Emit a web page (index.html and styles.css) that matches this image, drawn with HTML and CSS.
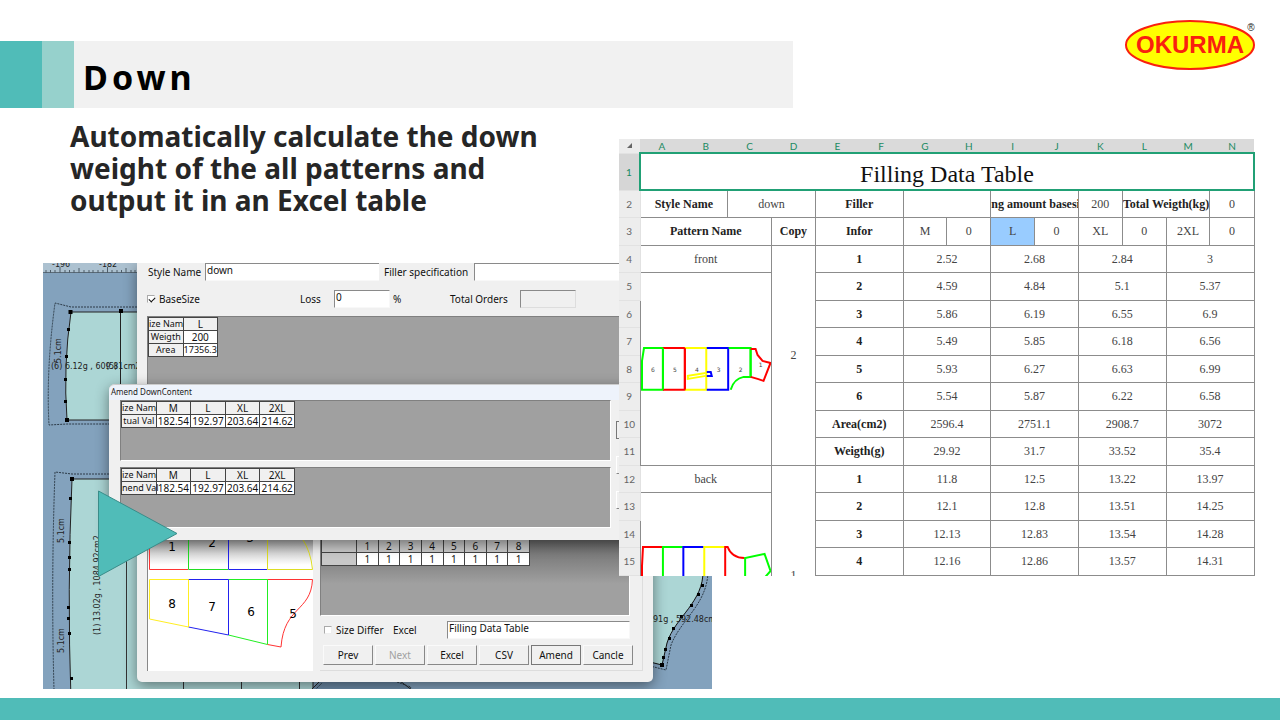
FILE: index.html
```html
<!DOCTYPE html>
<html lang="en">
<head>
<meta charset="utf-8">
<title>Down</title>
<link rel="stylesheet" href="styles.css">
</head>
<body>
<header class="top">
  <div class="banner">
    <span class="accent"></span><span class="accent-light"></span>
    <h1 class="title">Down</h1>
  </div>
  <svg class="logo" viewBox="1124 19 134 52" role="img" aria-label="OKURMA">
    <ellipse cx="1190" cy="45" rx="64" ry="24" fill="#ff0" stroke="#f9200f" stroke-width="2"/>
    <text x="1190" y="53" class="logo-text">OKURMA</text>
    <text x="1251" y="31" class="logo-mark">®</text>
  </svg>
</header>
<main class="content">
  <p class="lead">Automatically calculate the down weight of the all patterns and output it in an Excel table</p>

  <section class="cad">
    <svg class="canvas" viewBox="43 263 669 426" preserveAspectRatio="xMinYMin slice">
      <rect x="43" y="263" width="669" height="426" fill="#83a2bd"/>
      <rect x="43" y="263" width="94" height="10" fill="#acc1d0"/>
      <path d="M43 272.500H137" stroke="#5b6b78"/>
      <path d="M46 270v3M50.500 270v3M55 270v3M60 267v6M65 270v3M69.500 270v3M74 270v3M79 268v5M84 270v3M89 270v3M93 270v3M98 270v3M103 270v3M107.500 267v6M112 270v3M117 270v3M121.500 270v3M126 268v5M131 270v3M135 270v3" stroke="#4d5c68"/>
      <text x="52" y="267" class="cad-text">-196</text><text x="99" y="267" class="cad-text">-182</text>
      <path d="M71 312H140V420H67Q63 366 71 312Z" fill="#acd6d5" stroke="#222"/>
      <path d="M120.500 310V420" stroke="#222"/>
      <path d="M140 307H71L55 303Q46 370 49 425L67 424H140" class="dash"/>
      <path d="M68.500 310h4v4h-4zM119 309h4v4h-4zM65 418h4v4h-4zM67 328h3v3h-3zM65 355h3v3h-3zM64 378h3v3h-3zM64 400h3v3h-3z"/>
      <text x="51" y="369" class="cad-text">(6) 6.12g , 609.81cm2</text>
      <text x="106" y="369" class="cad-text">(5)</text>
      <text transform="translate(61 363) rotate(-90)" class="cad-text">5.1cm</text>
      <path d="M72 479H313V700H71Q67 590 72 479Z" fill="#acd6d5" stroke="#222"/>
      <path d="M112 474H72L55 472Q51 580 54 690" class="dash"/>
      <path d="M126.500 540V689M183.500 680V689M241.500 680V689M299.500 680V689" stroke="#333"/>
      <path d="M70 477h4v4h-4zM69 497h3v3h-3zM68 541h3v3h-3zM68 556h3v3h-3zM68 568h3v3h-3zM67 606h3v3h-3zM67 617h3v3h-3zM68 632h3v3h-3zM70 677h3v3h-3z"/>
      <text transform="translate(64 543) rotate(-90)" class="cad-text">5.1cm</text>
      <text transform="translate(64 653) rotate(-90)" class="cad-text">5.1cm</text>
      <text transform="translate(100 635) rotate(-90)" class="cad-text">(1) 13.02g , 1084.92cm2</text>
      <path d="M311 690L320 681H400L412 690Z" fill="#6d8ca8" stroke="#222"/>
      <path d="M315 690L322 683M397 682L411 687L409 690" class="dash"/>
      <path d="M650 570H703C704 602 675 617 667 643L662 665L650 662Z" fill="#acd6d5"/>
      <path d="M703 570C704 602 675 617 667 643L662 665L650 662" fill="none" stroke="#111"/>
      <path d="M708 570C708 604 681 619 671 645L666 670L650 666" class="dash"/>
      <path d="M660 663h4v4h-4zM701 584h3v3h-3zM697 593h3v3h-3zM690 604h3v3h-3zM680 615h3v3h-3zM672 627h3v3h-3zM668 637h3v3h-3zM664 648h3v3h-3zM662 656h3v3h-3z"/>
      <text x="653" y="622" class="cad-text">91g , 592.48cm</text>
    </svg>

    <div class="window dialog">
      <div class="row row-name">
        <label for="style-name" class="w-style">Style Name</label>
        <input id="style-name" class="field f-style" value="down">
        <label for="filler" class="w-filler">Filler specification</label>
        <input id="filler" class="field f-filler">
      </div>
      <div class="row row-base">
        <label class="check w-base"><input type="checkbox" class="box" checked>BaseSize</label>
        <label for="loss" class="w-loss">Loss</label>
        <input id="loss" class="field f-short" value="0"><span class="w-pct">%</span>
        <label for="orders" class="w-orders">Total Orders</label>
        <input id="orders" class="field f-short" disabled>
      </div>
      <div class="well well-base">
        <table class="grid grid-base">
          <tr><th>ize Nam</th><th>L</th></tr>
          <tr><th>Weigth</th><td>200</td></tr>
          <tr><th>Area</th><td class="tight">17356.3</td></tr>
        </table>
      </div>
      <div class="lower">
        <svg class="pieces" viewBox="147 510 166 161">
          <defs><linearGradient id="shade" x1="0" y1="0" x2="0" y2="1"><stop offset="0" stop-color="#999"/><stop offset="1" stop-color="#fff"/></linearGradient></defs>
          <rect x="147" y="510" width="166" height="161" fill="#fff"/>
          <rect x="147" y="535" width="166" height="30" fill="url(#shade)"/>
          <path d="M147.500 510V671" stroke="#888"/>
          <g fill="none">
            <path d="M149.500 535V569.500H188" stroke="#f33"/><path d="M188.500 535V569.500H228" stroke="#2d2"/>
            <path d="M228.500 535V569.500H267" stroke="#22e"/><path d="M267.500 535V569.500H312.500Q311 552 302 538" stroke="#dd2"/>
            <path d="M149.500 579.500H188.500V627L149.500 619Z" stroke="#fe2"/>
            <path d="M188.500 579.500H228.500V635L188.500 627" stroke="#22e"/>
            <path d="M228.500 579.500H267.500V644.500L228.500 635" stroke="#2e2"/>
            <path d="M267.500 579.500H312.500C311 612 284 606 281 647L267.500 644.500" stroke="#f33"/>
            <path d="M188.500 579.500V627" stroke="#fe2"/><path d="M228.500 579.500V635" stroke="#22e"/><path d="M267.500 579.500V644" stroke="#2e2"/>
          </g>
          <g class="piece-no"><text x="172" y="551">1</text><text x="212" y="547">2</text><text x="250" y="542">3</text><text x="172" y="608">8</text><text x="212" y="611">7</text><text x="251" y="616">6</text><text x="293" y="618">5</text></g>
        </svg>
        <div class="output">
          <div class="well well-out">
            <table class="grid grid-out">
              <tr><th class="first"></th><th>1</th><th>2</th><th>3</th><th>4</th><th>5</th><th>6</th><th>7</th><th>8</th></tr>
              <tr><th class="first"></th><td>1</td><td>1</td><td>1</td><td>1</td><td>1</td><td>1</td><td>1</td><td>1</td></tr>
            </table>
          </div>
          <div class="row row-excel">
            <label class="check w-differ"><input type="checkbox" class="box">Size Differ</label>
            <label for="excel-name" class="w-excel">Excel</label>
            <input id="excel-name" class="field f-excel" value="Filling Data Table">
          </div>
          <div class="buttons">
            <button>Prev</button><button disabled>Next</button><button>Excel</button><button>CSV</button><button class="default">Amend</button><button>Cancle</button>
          </div>
        </div>
      </div>
    </div>

    <div class="window amend">
      <div class="caption">Amend DownContent</div>
      <div class="amend-body">
        <div class="wells">
          <div class="well well-amend">
            <table class="grid grid-sizes">
              <tr><th>ize Nam</th><th>M</th><th>L</th><th>XL</th><th>2XL</th></tr>
              <tr><th>tual Val</th><td>182.54</td><td>192.97</td><td>203.64</td><td>214.62</td></tr>
            </table>
          </div>
          <div class="well well-amend">
            <table class="grid grid-sizes">
              <tr><th>ize Nam</th><th>M</th><th>L</th><th>XL</th><th>2XL</th></tr>
              <tr><th>nend Val</th><td>182.54</td><td>192.97</td><td>203.64</td><td>214.62</td></tr>
            </table>
          </div>
        </div>
        <div class="side"><span class="stub dark"></span><span class="stub"></span><span class="stub"></span></div>
      </div>
    </div>
    <svg class="arrow" viewBox="0 0 80 88"><path d="M.500 1V86.500L79 43.500Z" fill="#50bcb8" stroke="#398c89"/></svg>
  </section>

  <section class="sheet">
    <table class="cells">
      <colgroup><col class="index"><col span="14"></colgroup>
      <thead><tr><th><svg class="corner" viewBox="0 0 5 5"><path d="M5 0V5H0Z" fill="#666"/></svg></th><th>A</th><th>B</th><th>C</th><th>D</th><th>E</th><th>F</th><th>G</th><th>H</th><th>I</th><th>J</th><th>K</th><th>L</th><th>M</th><th>N</th></tr></thead>
      <tbody>
      <tr class="big"><th class="picked">1</th><td colspan="14" class="heading">Filling Data Table</td></tr>
      <tr><th>2</th><td colspan="2" class="b">Style Name</td><td colspan="2">down</td><td colspan="2" class="b">Filler</td><td colspan="2"></td><td colspan="2" class="b">ng amount basesi</td><td>200</td><td colspan="2" class="b">Total Weigth(kg)</td><td>0</td></tr>
      <tr><th>3</th><td colspan="3" class="b">Pattern Name</td><td class="b">Copy</td><td colspan="2" class="b">Infor</td><td>M</td><td>0</td><td class="base">L</td><td>0</td><td>XL</td><td>0</td><td>2XL</td><td>0</td></tr>
      <tr><th>4</th><td colspan="3">front</td><td rowspan="8">2</td><td colspan="2" class="b">1</td><td colspan="2">2.52</td><td colspan="2">2.68</td><td colspan="2">2.84</td><td colspan="2">3</td></tr>
      <tr><th>5</th><td colspan="3" rowspan="7">
        <svg class="pattern" viewBox="640 344 131 46">
          <g fill="none" stroke-width="2">
            <path d="M662 346H643L641 359V388H662Z" stroke="#0f0"/>
            <path d="M662 346H684V388H662" stroke="red"/><path d="M684 346H705.500V388H684" stroke="#ff0"/>
            <path d="M706 346H727.500V388H706" stroke="#00f"/><path d="M728 346H750V375H743Q733 377 730 388" stroke="#0f0"/>
            <path d="M662 346V388M750 346V375" stroke="#0f0"/><path d="M684 346V388" stroke="red"/>
            <path d="M750 347H755L757 353L762 359L770 361L763 379L757 377L750 375" stroke="red"/>
            <path d="M705 371L687 374V377L705 374" stroke="#ff0"/><path d="M706 370H710L711 374H706" stroke="#00f"/>
          </g>
          <g class="mini"><text x="652" y="370">6</text><text x="674" y="370">5</text><text x="696" y="370">4</text><text x="718" y="370">3</text><text x="740" y="370">2</text><text x="760" y="365">1</text></g>
        </svg></td><td colspan="2" class="b">2</td><td colspan="2">4.59</td><td colspan="2">4.84</td><td colspan="2">5.1</td><td colspan="2">5.37</td></tr>
      <tr><th>6</th><td colspan="2" class="b">3</td><td colspan="2">5.86</td><td colspan="2">6.19</td><td colspan="2">6.55</td><td colspan="2">6.9</td></tr>
      <tr><th>7</th><td colspan="2" class="b">4</td><td colspan="2">5.49</td><td colspan="2">5.85</td><td colspan="2">6.18</td><td colspan="2">6.56</td></tr>
      <tr><th>8</th><td colspan="2" class="b">5</td><td colspan="2">5.93</td><td colspan="2">6.27</td><td colspan="2">6.63</td><td colspan="2">6.99</td></tr>
      <tr><th>9</th><td colspan="2" class="b">6</td><td colspan="2">5.54</td><td colspan="2">5.87</td><td colspan="2">6.22</td><td colspan="2">6.58</td></tr>
      <tr><th>10</th><td colspan="2" class="b">Area(cm2)</td><td colspan="2">2596.4</td><td colspan="2">2751.1</td><td colspan="2">2908.7</td><td colspan="2">3072</td></tr>
      <tr><th>11</th><td colspan="2" class="b">Weigth(g)</td><td colspan="2">29.92</td><td colspan="2">31.7</td><td colspan="2">33.52</td><td colspan="2">35.4</td></tr>
      <tr><th>12</th><td colspan="3">back</td><td rowspan="8">1</td><td colspan="2" class="b">1</td><td colspan="2">11.8</td><td colspan="2">12.5</td><td colspan="2">13.22</td><td colspan="2">13.97</td></tr>
      <tr><th>13</th><td colspan="3" rowspan="7">
        <svg class="pattern" viewBox="640 545 131 86">
          <g fill="none" stroke-width="2">
            <path d="M662 546H642L641 565V630" stroke="red"/><path d="M662 630V546H682" stroke="#0f0"/>
            <path d="M682.500 630V546H703" stroke="#00f"/><path d="M703.500 630V546H724" stroke="#ff0"/>
            <path d="M724.500 630V546H727Q731 557 744 557" stroke="red"/><path d="M744.500 630V557L764 553L770 570L763 578" stroke="#0f0"/>
          </g>
        </svg></td><td colspan="2" class="b">2</td><td colspan="2">12.1</td><td colspan="2">12.8</td><td colspan="2">13.51</td><td colspan="2">14.25</td></tr>
      <tr><th>14</th><td colspan="2" class="b">3</td><td colspan="2">12.13</td><td colspan="2">12.83</td><td colspan="2">13.54</td><td colspan="2">14.28</td></tr>
      <tr><th>15</th><td colspan="2" class="b">4</td><td colspan="2">12.16</td><td colspan="2">12.86</td><td colspan="2">13.57</td><td colspan="2">14.31</td></tr>
      <tr><th></th><td colspan="2"></td><td colspan="2"></td><td colspan="2"></td><td colspan="2"></td><td colspan="2"></td></tr>
      <tr><th></th><td colspan="10"></td></tr>
      <tr><th></th><td colspan="10"></td></tr>
      <tr><th></th><td colspan="10"></td></tr>
      </tbody>
    </table>
  </section>
</main>
<footer class="foot"></footer>
</body>
</html>
```

FILE: styles.css
```css
* { box-sizing: border-box; }
body { margin: 0; min-height: 100vh; display: flex; flex-direction: column; background: #fff; font-family: "Noto Sans", sans-serif; }

.top { display: flex; justify-content: space-between; align-items: flex-start; padding: 19px 22px 0 0; }
.banner { display: flex; width: 63%; height: 67px; margin-top: 22px; background: #f1f1f1; align-items: stretch; }
.accent { width: 42px; background: #50bcb8; }
.accent-light { width: 32px; background: #96d1cc; }
.title { margin: 0; padding: 6px 0 0 9px; font-size: 34px; line-height: 60px; letter-spacing: 4px; color: #000; }
.logo { width: 134px; height: 52px; }
.logo-text { font: bold 24px "Liberation Sans", sans-serif; fill: #f9200f; text-anchor: middle; }
.logo-mark { font: 10px "Liberation Sans", sans-serif; fill: #222; text-anchor: middle; }

.content { flex: 1; display: grid; grid-template-columns: 43px 576px 93px 1fr 25px; grid-template-rows: 31px 124px 313px 113px; }
.lead { grid-area: 1 / 2 / 3 / 3; margin: 0; padding: 12px 60px 0 27px; font-size: 28px; line-height: 32px; font-weight: bold; color: #262626; }
.foot { height: 22px; background: #50bcb8; }

.cad { grid-area: 3 / 2 / 5 / 4; position: relative; overflow: hidden; font-size: 10px; line-height: 12px; color: #111; }
.canvas { display: block; width: 100%; height: 100%; }
.cad-text { font: 8px "DejaVu Sans", sans-serif; fill: #222; }
.dash { fill: none; stroke: #2c3b48; stroke-dasharray: 2 1; }
.window { position: absolute; background: #f0f0f0; box-shadow: 0 4px 14px rgba(0, 0, 0, .45); }
.dialog { left: 94px; top: 0; width: 516px; padding: 0 10px 11px; border-radius: 0 0 5px 5px; }
.amend { left: 66px; top: 121px; width: 530px; height: 156px; border-radius: 6px 0 0 0; }
.arrow { position: absolute; left: 55px; top: 227px; width: 80px; height: 88px; }

.row { display: flex; align-items: center; white-space: nowrap; }
.row-name { height: 18px; }
.row-base { height: 35px; }
.field { height: 18px; margin: 0; padding: 0 1px 4px; border: 1px solid #f8f8f8; border-top-color: #8a8a8a; border-left-color: #8a8a8a; border-radius: 0; background: #fff; font: 10px "Noto Sans", sans-serif; color: #111; min-width: 0; }
.field:disabled { background: #f0f0f0; border-right-color: #ddd; border-bottom-color: #ddd; }
.check { display: flex; align-items: center; gap: 4px; }
.box { appearance: none; width: 8px; height: 8px; margin: 0; background: #fff; border: 1px solid #aaa; border-right-color: #eee; border-bottom-color: #eee; position: relative; }
.box:checked::after { content: ""; position: absolute; left: 1px; top: 1px; width: 5px; height: 3px; border: solid #111; border-width: 0 0 1px 1px; transform: rotate(-45deg); }
.w-style { width: 58px; padding-left: 1px; }
.f-style { width: 174px; border-right: 0; }
.w-filler { width: 95px; padding-left: 5px; }
.f-filler { flex: 1; }
.w-base { width: 153px; }
.w-loss { width: 34px; }
.f-short { width: 56px; }
.w-pct { width: 60px; padding-left: 3px; }
.w-orders { width: 70px; }

.well { background: #a0a0a0; border: 1px solid #808080; border-right-color: #fff; border-bottom-color: #fff; }
.well-base { height: 184px; }
.grid { border-collapse: collapse; table-layout: fixed; line-height: 12px; }
.grid th, .grid td { height: 13px; padding: 0; border: 1px solid #444; text-align: center; font-weight: normal; white-space: nowrap; background: #fff; }
.grid th { background: #f0f0f0; }
.grid th:first-child, .grid .tight { font-size: 9px; }
.grid-base { width: 70px; }
.grid-sizes { width: 174px; }
.grid-out { width: 209px; }
.lower { display: flex; gap: 7px; margin-top: 10px; height: 161px; }
.pieces { width: 166px; height: 161px; }
.piece-no { font: 12px "DejaVu Sans", sans-serif; text-anchor: middle; }
.output { width: 323px; padding-right: 12px; border: 1px solid #ddd; border-width: 0 1px 1px 0; }
.well-out { height: 106px; padding-top: 28px; background: linear-gradient(#666 25%, #a0a0a0 70%); }
.grid-out th { background: #c8c8c8; }
.grid-out .first { width: 35px; }
.row-excel { height: 18px; margin: 5px 0 6px; }
.w-differ { width: 69px; padding-left: 4px; }
.w-excel { width: 58px; padding-left: 4px; }
.f-excel { flex: 1; }
.buttons { display: flex; gap: 2px; padding-left: 3px; width: 313px; }
.buttons button { flex: 1; height: 20px; padding: 0; background: #f0f0f0; border: 1px solid #fafafa; border-right-color: #888; border-bottom-color: #888; font: 10px "Noto Sans", sans-serif; color: #111; }
.buttons button:disabled { color: #a0a0a0; }
.buttons .default { border-color: #777; }

.caption { height: 16px; padding: 1px 2px; border-top: 1px solid #ccc; border-radius: 6px 0 0 0; background: #eef3fb; font: 8px/12px "Noto Sans", sans-serif; color: #222; }
.amend-body { display: flex; gap: 5px; padding-left: 11px; }
.wells { width: 491px; display: flex; flex-direction: column; gap: 6px; }
.well-amend { height: 61px; }
.side { display: flex; flex-direction: column; gap: 17px; padding-top: 21px; }
.stub { width: 13px; height: 18px; border: 1px solid #fff; border-bottom-color: #888; }
.dark { border-color: #777; }

.sheet { grid-area: 2 / 3 / 4 / 5; position: relative; overflow: hidden; height: 437px; background: #fff; }
.cells { border-collapse: collapse; table-layout: fixed; width: 100%; font-family: "Liberation Serif", serif; font-size: 12px; line-height: 14px; color: #444; }
.index { width: 21px; }
.cells th { padding: 0; border: 1px solid #e2e2e2; border-left: 0; background: #ededed; font: 10px/12px Lato, sans-serif; color: #666; }
.cells thead th { height: 14px; border: 0; background: #dadada; color: #1a8a62; }
.cells thead th:first-child { background: #ececec; }
.corner { display: block; width: 5px; height: 5px; margin: 0 auto; }
.cells td { padding: 0; border: 1px solid #8c8c8c; text-align: center; white-space: nowrap; overflow: hidden; }
.cells tbody tr { height: 27px; }
.cells tbody tr:nth-child(odd) { height: 28px; }
.cells tbody tr.big:first-child { height: 37px; }
.cells th.picked { background: #d6d6d6; color: #1a8a62; }
.cells td.heading { border: 2px solid #21a075; font-size: 24px; line-height: 26px; color: #111; padding-top: 4px; }
.cells .b { font-weight: bold; color: #222; }
.cells .base { background: #99ccff; }
.pattern { display: block; width: 100%; }
.mini { font: 6px "DejaVu Sans", sans-serif; fill: #444; text-anchor: middle; }
```
